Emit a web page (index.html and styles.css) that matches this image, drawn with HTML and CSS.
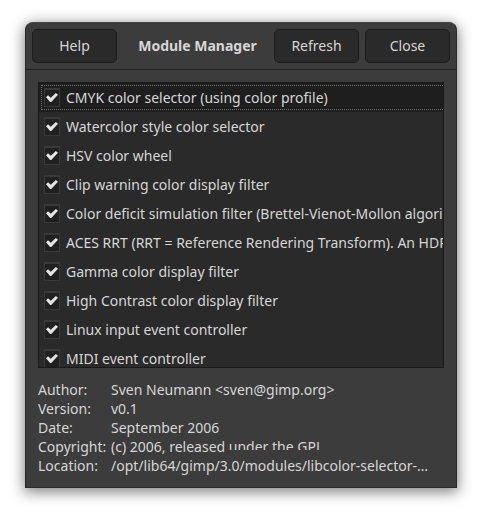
FILE: index.html
```html
<!DOCTYPE html>
<html lang="en">
<head>
<meta charset="utf-8">
<title>Module Manager</title>
<link rel="stylesheet" href="styles.css">
</head>
<body>
<main class="dialog">
  <header class="titlebar">
    <button class="button" type="button">Help</button>
    <h1 class="title">Module Manager</h1>
    <button class="button" type="button">Refresh</button>
    <button class="button" type="button">Close</button>
  </header>
  <div class="content">
    <div class="modules">
      <label class="module selected"><input class="check" type="checkbox" checked><span>CMYK color selector (using color profile)</span></label>
      <label class="module"><input class="check" type="checkbox" checked><span>Watercolor style color selector</span></label>
      <label class="module"><input class="check" type="checkbox" checked><span>HSV color wheel</span></label>
      <label class="module"><input class="check" type="checkbox" checked><span>Clip warning color display filter</span></label>
      <label class="module"><input class="check" type="checkbox" checked><span>Color deficit simulation filter (Brettel-Vienot-Mollon algorithm)</span></label>
      <label class="module"><input class="check" type="checkbox" checked><span>ACES RRT (RRT = Reference Rendering Transform). An HDR filter</span></label>
      <label class="module"><input class="check" type="checkbox" checked><span>Gamma color display filter</span></label>
      <label class="module"><input class="check" type="checkbox" checked><span>High Contrast color display filter</span></label>
      <label class="module"><input class="check" type="checkbox" checked><span>Linux input event controller</span></label>
      <label class="module"><input class="check" type="checkbox" checked><span>MIDI event controller</span></label>
    </div>
    <dl class="details">
      <dt>Author:</dt><dd>Sven Neumann &lt;sven@gimp.org&gt;</dd>
      <dt>Version:</dt><dd>v0.1</dd>
      <dt>Date:</dt><dd>September 2006</dd>
      <dt>Copyright:</dt><dd>(c) 2006, released <span class="cut">under the GPL</span></dd>
      <dt>Location:</dt><dd>/opt/lib64/gimp/3.0/modules/libcolor-selector-…</dd>
    </dl>
  </div>
</main>
</body>
</html>
```

FILE: styles.css
```css
* {
  box-sizing: border-box;
}

body {
  margin: 0;
  padding: 22px 25px 28px;
  background: #ffffff;
  color: #d6d6d6;
  font-family: "Noto Sans", sans-serif;
  font-size: 14px;
  line-height: 19px;
}

.dialog {
  border: 1px solid #2b2b2b;
  border-top-color: #444444;
  border-radius: 8px 8px 0 0;
  background: #3c3c3c;
  box-shadow: 0 3px 14px 1px rgba(0, 0, 0, 0.5);
}

.titlebar {
  display: flex;
  align-items: center;
  gap: 6px;
  padding: 6px;
  border-bottom: 1px solid #222222;
}

.button {
  width: 85px;
  height: 34px;
  padding: 0 0 2px;
  border: 1px solid #1c1c1c;
  border-radius: 5px;
  background: #2a2a2a;
  color: inherit;
  font: inherit;
}

.title {
  flex: 1;
  margin: 0;
  padding: 0 0 2px 4px;
  font-size: 14px;
  font-weight: 700;
  text-align: center;
  white-space: nowrap;
}

.content {
  padding: 12px;
}

.modules {
  height: 286px;
  overflow: hidden;
  border: 1px solid #1a1a1a;
  background: #2a2a2a;
}

.module {
  display: flex;
  align-items: center;
  gap: 6px;
  height: 29px;
  padding-left: 5px;
  white-space: nowrap;
}

.selected {
  margin-right: -4px;
  background: #1e1e1e;
  outline: 1px dotted #707070;
  outline-offset: -3px;
}

.check {
  display: grid;
  flex: none;
  place-items: center;
  appearance: none;
  width: 16px;
  height: 19px;
  margin: 0;
  border: 1px solid #393939;
  background: #202020;
  box-shadow: inset 0 1px #393939;
}

.check:checked::before {
  content: "";
  width: 12px;
  height: 9px;
  background: #e4e4e4;
  clip-path: polygon(0 46%, 17% 26%, 40% 52%, 82% 0, 100% 20%, 44% 100%, 34% 100%);
}

.details {
  display: grid;
  grid-template-columns: 67px 1fr;
  column-gap: 6px;
  margin: 12px 0 0;
}

.details dd {
  margin: 0;
  white-space: nowrap;
}

.cut {
  display: inline-block;
  clip-path: inset(0 0 6px 0);
}
```
